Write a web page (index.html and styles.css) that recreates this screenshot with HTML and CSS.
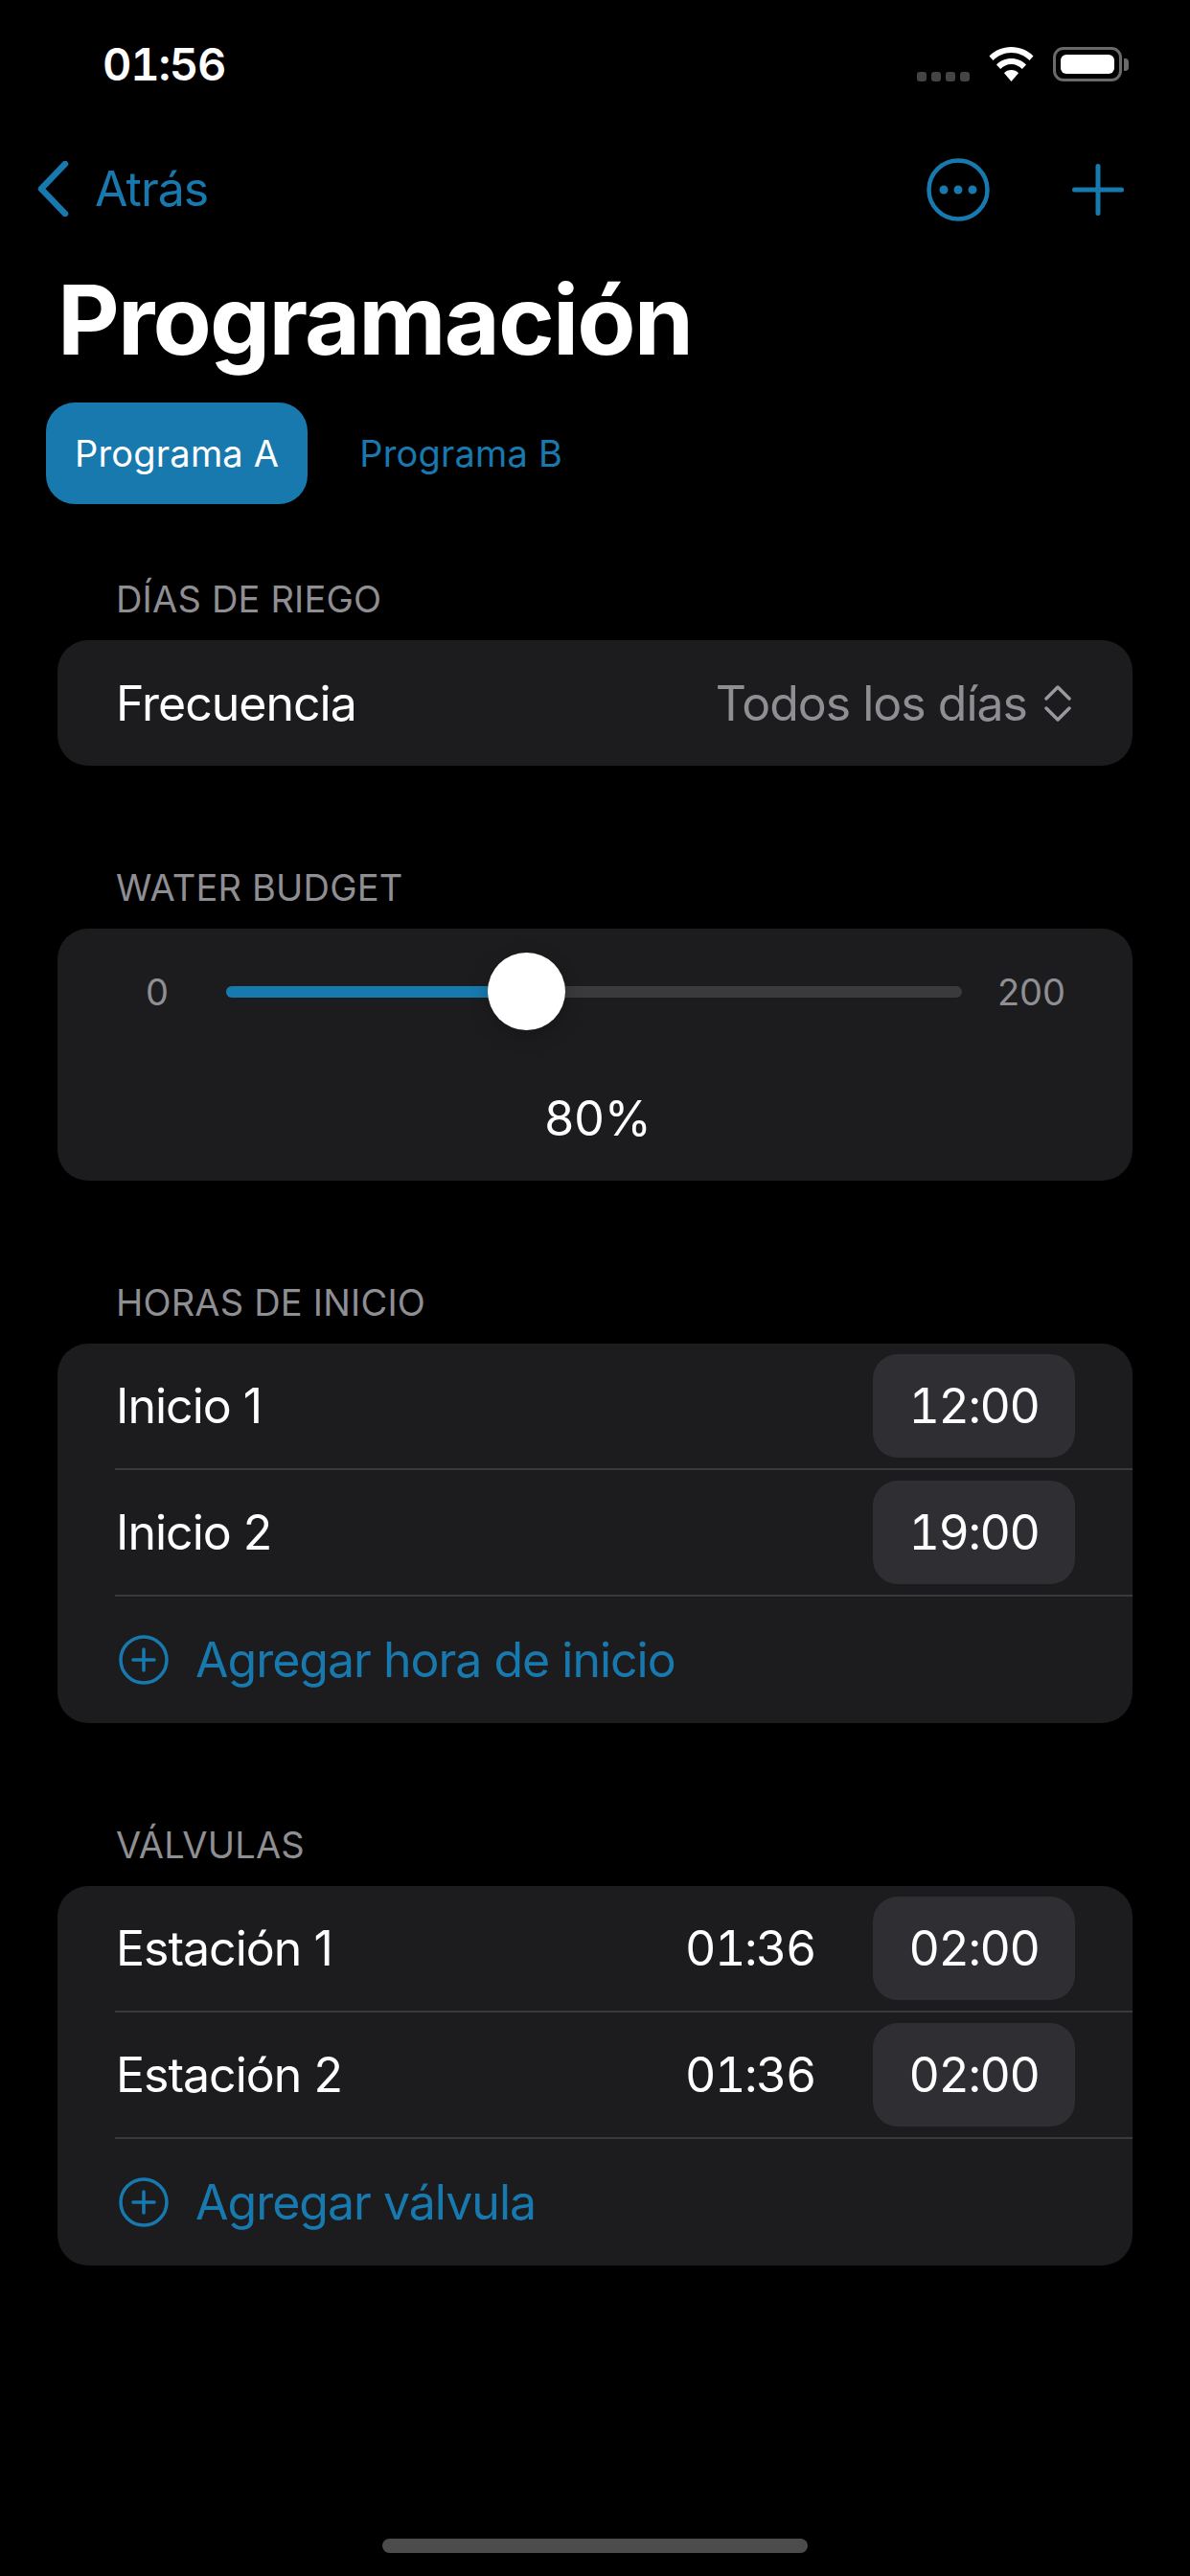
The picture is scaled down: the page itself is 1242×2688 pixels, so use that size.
FILE: index.html
```html
<!DOCTYPE html>
<html lang="es">

<head>
    <meta charset="UTF-8">
    <meta name="viewport" content="width=device-width, initial-scale=1.0">
    <title>Programación</title>
    <link rel="stylesheet" href="styles.css">
</head>

<body>
    <div class="status-bar">
        <span class="status-time">01:56</span>
        <div class="status-icons">
            <div class="signal-dots"><i></i><i></i><i></i><i></i></div>
            <svg class="wifi" width="47" height="36" viewBox="0 0 47 36">
                <path fill="#fff" d="M23.5 0C14.5 0 6.5 3.500 0.500 9.500L4.500 14C9.500 9 16 6 23.500 6S37.500 9 42.500 14L46.500 9.500C40.500 3.500 32.500 0 23.500 0Z" />
                <path fill="#fff" d="M23.500 12C17.500 12 12 14.300 8 18.500L12.200 23C15 20 19 18 23.500 18S32 20 34.800 23L39 18.500C35 14.300 29.500 12 23.500 12Z" />
                <path fill="#fff" d="M23.500 24C20.500 24 18 25 16 27.200L23.500 36L31 27.200C29 25 26.500 24 23.500 24Z" />
            </svg>
            <div class="battery"><div class="battery-level"></div></div>
            <div class="battery-cap"></div>
        </div>
    </div>

    <div class="nav-bar">
        <div class="nav-back">
            <svg width="34" height="58" viewBox="0 0 34 58">
                <path d="M30 3L5 29L30 55" fill="none" stroke="#1779ae" stroke-width="6.500" stroke-linecap="round" stroke-linejoin="round" />
            </svg>
            <span>Atrás</span>
        </div>
        <div class="nav-actions">
            <svg width="66" height="66" viewBox="0 0 66 66">
                <circle cx="33" cy="33" r="30.500" fill="none" stroke="#1779ae" stroke-width="4.500" />
                <circle cx="18" cy="33" r="4.500" fill="#1779ae" />
                <circle cx="33" cy="33" r="4.500" fill="#1779ae" />
                <circle cx="48" cy="33" r="4.500" fill="#1779ae" />
            </svg>
            <svg width="54" height="54" viewBox="0 0 54 54">
                <path d="M27 2.500V51.500M2.500 27H51.500" fill="none" stroke="#1779ae" stroke-width="5" stroke-linecap="round" />
            </svg>
        </div>
    </div>

    <h1 class="page-title">Programación</h1>

    <div class="tabs">
        <div class="tab tab-active">Programa A</div>
        <div class="tab">Programa B</div>
    </div>

    <div class="section section-first">
        <div class="section-header">DÍAS DE RIEGO</div>
        <div class="card">
            <div class="row">
                <span>Frecuencia</span>
                <div class="picker">
                    <span>Todos los días</span>
                    <svg width="28" height="38" viewBox="0 0 28 38">
                        <path d="M2 14L14 2L26 14M2 24L14 36L26 24" fill="none" stroke="#98989e" stroke-width="3.500" stroke-linecap="round" stroke-linejoin="round" />
                    </svg>
                </div>
            </div>
        </div>
    </div>

    <div class="section">
        <div class="section-header">WATER BUDGET</div>
        <div class="card slider-card">
            <div class="slider-row">
                <span class="slider-min">0</span>
                <div class="slider-track">
                    <div class="slider-fill"></div>
                    <div class="slider-thumb"></div>
                </div>
                <span class="slider-max">200</span>
            </div>
            <div class="slider-value">80%</div>
        </div>
    </div>

    <div class="section">
        <div class="section-header">HORAS DE INICIO</div>
        <div class="card">
            <div class="row">
                <span>Inicio 1</span>
                <div class="time-chip">12:00</div>
            </div>
            <div class="divider"></div>
            <div class="row">
                <span>Inicio 2</span>
                <div class="time-chip">19:00</div>
            </div>
            <div class="divider"></div>
            <div class="row row-add">
                <svg width="52" height="52" viewBox="0 0 52 52">
                    <circle cx="26" cy="26" r="24" fill="none" stroke="#1779ae" stroke-width="3.500" />
                    <path d="M26 15V37M15 26H37" fill="none" stroke="#1779ae" stroke-width="3.500" stroke-linecap="round" />
                </svg>
                <span>Agregar hora de inicio</span>
            </div>
        </div>
    </div>

    <div class="section">
        <div class="section-header">VÁLVULAS</div>
        <div class="card">
            <div class="row">
                <span>Estación 1</span>
                <div class="row-right">
                    <span class="time-value">01:36</span>
                    <div class="time-chip">02:00</div>
                </div>
            </div>
            <div class="divider"></div>
            <div class="row">
                <span>Estación 2</span>
                <div class="row-right">
                    <span class="time-value">01:36</span>
                    <div class="time-chip">02:00</div>
                </div>
            </div>
            <div class="divider"></div>
            <div class="row row-add">
                <svg width="52" height="52" viewBox="0 0 52 52">
                    <circle cx="26" cy="26" r="24" fill="none" stroke="#1779ae" stroke-width="3.500" />
                    <path d="M26 15V37M15 26H37" fill="none" stroke="#1779ae" stroke-width="3.500" stroke-linecap="round" />
                </svg>
                <span>Agregar válvula</span>
            </div>
        </div>
    </div>

    <div class="home-indicator"></div>
</body>

</html>
```

FILE: styles.css
```css
:root {
    --accent: #1779ae;
    --card-bg: #1c1c1e;
    --chip-bg: #2f2f33;
    --muted: #8e8e93;
}

* {
    box-sizing: border-box;
}

body {
    width: 1242px;
    height: 2688px;
    margin: 0;
    display: flex;
    flex-direction: column;
    background-color: #000;
    color: #fff;
    font-family: "Inter", "Liberation Sans", sans-serif;
    overflow: hidden;
}

/* Status bar */
.status-bar {
    height: 136px;
    padding: 49px 64px 0 107px;
    display: flex;
    justify-content: space-between;
    align-items: flex-start;
}

.status-time {
    font-size: 47px;
    line-height: 36px;
    font-weight: 600;
    letter-spacing: -1.2px;
    font-variant-numeric: tabular-nums;
}

.status-icons {
    display: flex;
    align-items: flex-start;
}

.signal-dots {
    display: flex;
    gap: 5px;
    margin-top: 26px;
    margin-right: 20px;
}

.signal-dots i {
    width: 10px;
    height: 10px;
    border-radius: 3px;
    background-color: #444;
}

.wifi {
    margin-right: 20px;
}

.battery {
    width: 72px;
    height: 36px;
    padding: 5px;
    border: 3px solid #6a6a6a;
    border-radius: 11px;
}

.battery-level {
    height: 100%;
    background-color: #fff;
    border-radius: 6px;
}

.battery-cap {
    width: 5px;
    height: 13px;
    margin-top: 12px;
    margin-left: 2px;
    background-color: #6a6a6a;
    border-radius: 0 4px 4px 0;
}

/* Nav bar */
.nav-bar {
    height: 138px;
    padding: 29px 69px 0 38px;
    display: flex;
    justify-content: space-between;
    align-items: flex-start;
}

.nav-back {
    display: flex;
    align-items: center;
    gap: 27px;
    margin-top: 2px;
    color: var(--accent);
    font-size: 50px;
    letter-spacing: -1px;
}

.nav-actions {
    display: flex;
    align-items: center;
    gap: 86px;
}

.page-title {
    margin: 0;
    padding-left: 60px;
    font-size: 100px;
    line-height: 120px;
    font-weight: 700;
    letter-spacing: -1.8px;
}

/* Tabs */
.tabs {
    display: flex;
    margin-top: 26px;
    padding-left: 48px;
}

.tab {
    height: 106px;
    padding: 0 30px;
    display: flex;
    align-items: center;
    border-radius: 30px;
    color: var(--accent);
    font-size: 38px;
    letter-spacing: 0.2px;
}

.tab-active {
    background-color: var(--accent);
    color: #fff;
    margin-right: 24px;
}

/* Sections */
.section {
    margin-top: 109px;
    padding: 0 60px;
}

.section-first {
    margin-top: 81px;
}

.section-header {
    height: 37px;
    margin-bottom: 24px;
    padding-left: 61px;
    font-size: 38px;
    line-height: 37px;
    letter-spacing: 0.2px;
    color: var(--muted);
}

.card {
    background-color: var(--card-bg);
    border-radius: 32px;
    overflow: hidden;
}

.row {
    height: 130px;
    padding: 0 60px 0 61px;
    display: flex;
    align-items: center;
    justify-content: space-between;
    font-size: 50px;
    letter-spacing: -1px;
}

.row:only-child {
    height: 131px;
}

.divider {
    height: 2px;
    margin-left: 60px;
    background-color: #3a3a3c;
}

.picker {
    display: flex;
    align-items: center;
    gap: 18px;
    margin-right: 4px;
    color: var(--muted);
}

.time-chip,
.time-value {
    letter-spacing: -1.4px;
    font-variant-numeric: tabular-nums;
}

.time-chip {
    width: 211px;
    height: 108px;
    display: flex;
    align-items: center;
    justify-content: center;
    background-color: var(--chip-bg);
    border-radius: 26px;
}

.row-right {
    display: flex;
    align-items: center;
    gap: 60px;
}

.row-add {
    justify-content: flex-start;
    gap: 28px;
    color: var(--accent);
    padding-left: 64px;
}

.row-add:last-child {
    height: 132px;
}

/* Slider */
.slider-card {
    height: 263px;
    padding: 0 70px 0 92px;
}

.slider-row {
    height: 132px;
    display: flex;
    align-items: center;
    color: var(--muted);
    font-size: 38px;
}

.slider-min {
    width: 84px;
}

.slider-max {
    margin-left: 37px;
}

.slider-track {
    position: relative;
    width: 769px;
    height: 12px;
    border-radius: 6px;
    background-color: #3a3a3c;
}

.slider-fill {
    width: 300px;
    height: 100%;
    border-radius: 6px 0 0 6px;
    background-color: var(--accent);
}

.slider-thumb {
    position: absolute;
    left: 273px;
    top: -35px;
    width: 81px;
    height: 81px;
    border-radius: 50%;
    background-color: #fff;
    box-shadow: 0 6px 20px rgba(0, 0, 0, 0.2);
}

.slider-value {
    margin-left: -16px;
    text-align: center;
    font-size: 50px;
    line-height: 132px;
}

.home-indicator {
    width: 444px;
    height: 15px;
    margin: auto auto 24px;
    border-radius: 8px;
    background-color: #4c4c4c;
}
```
